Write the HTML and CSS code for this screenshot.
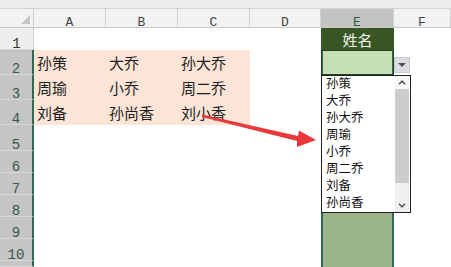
FILE: index.html
```html
<!DOCTYPE html>
<html lang="zh">
<head>
<meta charset="UTF-8">
<title>数据验证下拉列表</title>
<link rel="stylesheet" href="styles.css">
</head>
<body>
<div class="strip"></div>
<div class="sheet">
    <div class="corner"><span class="tri"></span></div>
    <div class="ch">A</div>
    <div class="ch">B</div>
    <div class="ch">C</div>
    <div class="ch">D</div>
    <div class="ch on">E</div>
    <div class="ch">F</div>

    <div class="rh">1</div>
    <div class="c"></div><div class="c"></div><div class="c"></div><div class="c"></div>
    <div class="c title">姓名</div>
    <div class="c"></div>

    <div class="rh on">2</div>
    <div class="c fill">孙策</div><div class="c fill">大乔</div><div class="c fill">孙大乔</div>
    <div class="c"></div><div class="c active"></div><div class="c"></div>

    <div class="rh on">3</div>
    <div class="c fill">周瑜</div><div class="c fill">小乔</div><div class="c fill">周二乔</div>
    <div class="c"></div><div class="c sel"></div><div class="c"></div>

    <div class="rh on">4</div>
    <div class="c fill">刘备</div><div class="c fill">孙尚香</div><div class="c fill">刘小香</div>
    <div class="c"></div><div class="c sel"></div><div class="c"></div>

    <div class="rh on">5</div>
    <div class="c"></div><div class="c"></div><div class="c"></div><div class="c"></div><div class="c sel"></div><div class="c"></div>
    <div class="rh on">6</div>
    <div class="c"></div><div class="c"></div><div class="c"></div><div class="c"></div><div class="c sel"></div><div class="c"></div>
    <div class="rh on">7</div>
    <div class="c"></div><div class="c"></div><div class="c"></div><div class="c"></div><div class="c sel"></div><div class="c"></div>
    <div class="rh on">8</div>
    <div class="c"></div><div class="c"></div><div class="c"></div><div class="c"></div><div class="c sel"></div><div class="c"></div>
    <div class="rh on">9</div>
    <div class="c"></div><div class="c"></div><div class="c"></div><div class="c"></div><div class="c sel"></div><div class="c"></div>
    <div class="rh on">10</div>
    <div class="c"></div><div class="c"></div><div class="c"></div><div class="c"></div><div class="c sel"></div><div class="c"></div>
    <div class="rh on"></div>
    <div class="c"></div><div class="c"></div><div class="c"></div><div class="c"></div><div class="c sel"></div><div class="c"></div>
</div>

<!-- dropdown of the data validation cell -->
<div class="dd-btn"><span class="caret"></span></div>
<div class="dd-list">
    <div class="dd-items">
        <div>孙策</div>
        <div>大乔</div>
        <div>孙大乔</div>
        <div>周瑜</div>
        <div>小乔</div>
        <div>周二乔</div>
        <div>刘备</div>
        <div>孙尚香</div>
    </div>
    <div class="dd-bar">
        <div class="bar-btn">
            <svg width="8" height="5" viewBox="0 0 8 5"><path d="M1 4.3 L4 1.2 L7 4.3" fill="none" stroke="#5c5c5c" stroke-width="1.6"/></svg>
        </div>
        <div class="thumb"></div>
        <div class="track"></div>
        <div class="bar-btn down">
            <svg width="8" height="5" viewBox="0 0 8 5"><path d="M1 0.7 L4 3.8 L7 0.7" fill="none" stroke="#5c5c5c" stroke-width="1.6"/></svg>
        </div>
    </div>
</div>

<svg class="arrow" width="451" height="267" viewBox="0 0 451 267">
    <polygon points="202,114.5 298,136 299,130.5 316,140 297,147 297,141 202,117" fill="#e9393b"/>
</svg>
</body>
</html>
```

FILE: styles.css
```css
* {
    box-sizing: border-box;
}

body {
    margin: 0;
    width: 451px;
    height: 267px;
    overflow: hidden;
    background: #fff;
    font-family: "Liberation Sans", "Noto Sans CJK SC", sans-serif;
}

.strip {
    height: 9px;
    background: #ededed;
    border-bottom: 1px solid #d4d4d4;
}

.sheet {
    display: grid;
    grid-template-columns: 34px 72px 72px 72px 71px 73px 57px;
    grid-template-rows: 19px 22px 25px 25px 25px 26px repeat(5, 22px) 6px;
}

.corner {
    background: #f2f2f2;
    border-right: 1px solid #cfcfcf;
    border-bottom: 1px solid #c9c9c9;
    display: flex;
    justify-content: flex-end;
    align-items: flex-end;
    padding: 0 3px 3px 0;
}

.tri {
    width: 0;
    height: 0;
    border-left: 9px solid transparent;
    border-bottom: 9px solid #c6c6c6;
}

.ch {
    background: #f2f2f2;
    border-right: 1px solid #d2d2d2;
    border-bottom: 1px solid #c9c9c9;
    font: 13px/8px "Liberation Mono", monospace;
    color: #444;
    display: flex;
    justify-content: center;
    align-items: flex-end;
}

.ch.on {
    background: #c3c3c3;
    color: #2f5d40;
}

.rh {
    background: #eeeeee;
    border-right: 1px solid #cfcfcf;
    border-bottom: 1px solid #d3d3d3;
    font: 14px/8px "Liberation Mono", monospace;
    color: #333;
    display: flex;
    justify-content: center;
    align-items: flex-end;
    padding-bottom: 1px;
}

.rh.on {
    background: #c5c5c5;
    color: #355a4a;
    border-right: 2px solid #2f6b52;
    border-bottom-color: #d8d8d8;
}

.c {
    display: flex;
    align-items: center;
    padding-left: 3px;
    font-size: 15px;
    color: #1e1e1e;
    white-space: nowrap;
}

.fill {
    background: #fce4d6;
}

.title {
    background: #375623;
    color: #f2f6ee;
    justify-content: center;
    padding-left: 0;
}

.active {
    background: #c6e0b4;
    border: 1px solid #23402a;
    box-shadow: inset 1px 0 #2f6b52, inset -1px 0 #2f6b52;
}

.sel {
    background: #9db58b;
    box-shadow: inset 2px 0 #2f6b52, inset -2px 0 #2f6b52;
}

.dd-btn {
    position: absolute;
    left: 394px;
    top: 57px;
    width: 16px;
    height: 16px;
    background: #dcdce3;
    border: 1px solid #c9c9d1;
    display: flex;
    justify-content: center;
    align-items: center;
}

.caret {
    width: 0;
    height: 0;
    border-left: 4px solid transparent;
    border-right: 4px solid transparent;
    border-top: 4px solid #505050;
}

.dd-list {
    position: absolute;
    left: 321px;
    top: 75px;
    width: 90px;
    height: 138px;
    border: 1px solid #222;
    background: #fff;
    display: flex;
}

.dd-items {
    flex: 1;
    padding-left: 4px;
    font-size: 12.5px;
    line-height: 17px;
    color: #111;
    white-space: nowrap;
}

.dd-bar {
    width: 14px;
    margin-right: 1px;
    display: flex;
    flex-direction: column;
    background: #f0f0f0;
}

.bar-btn {
    height: 13px;
    display: flex;
    justify-content: center;
    align-items: center;
    background: #f6f6f6;
}

.bar-btn.down {
    height: 14px;
    background: #f0f0f0;
}

.thumb {
    height: 94px;
    background: #cdcdcd;
}

.track {
    flex: 1;
}

.arrow {
    position: absolute;
    left: 0;
    top: 0;
}
```
